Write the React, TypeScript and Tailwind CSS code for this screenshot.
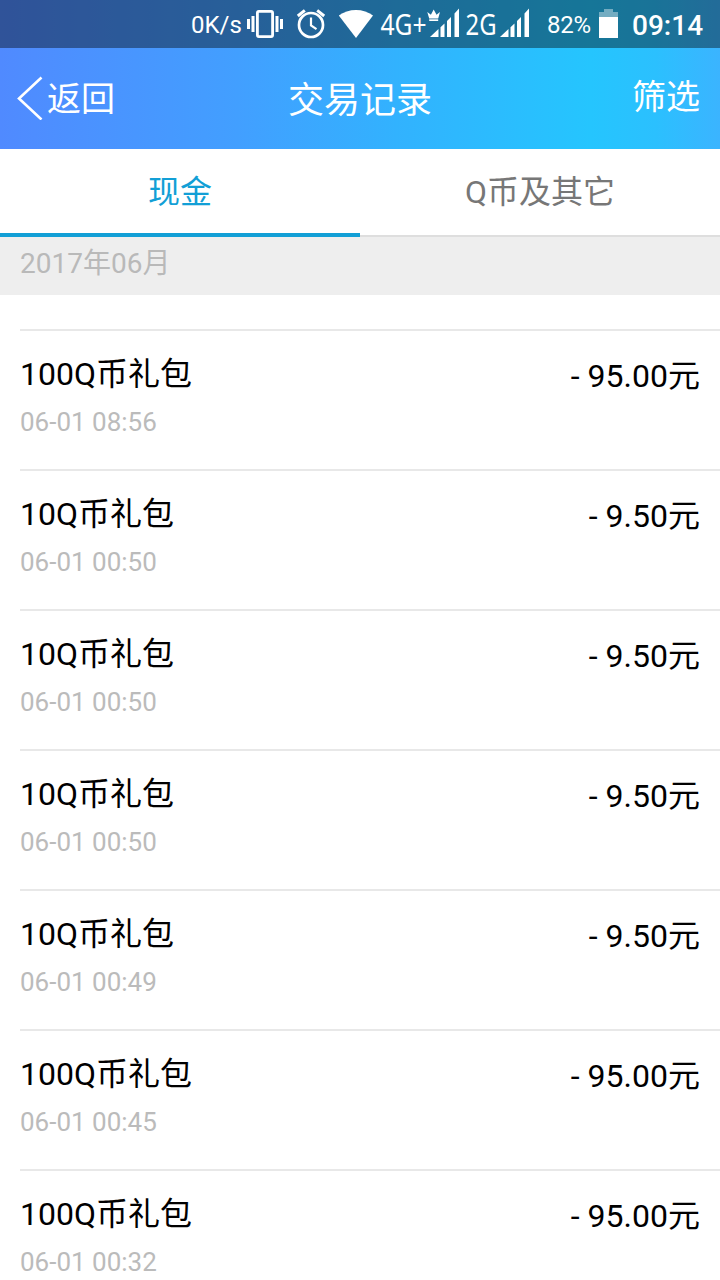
const records = [
  { title: "100Q币礼包", time: "06-01 08:56", amount: "95.00" },
  { title: "10Q币礼包", time: "06-01 00:50", amount: "9.50" },
  { title: "10Q币礼包", time: "06-01 00:50", amount: "9.50" },
  { title: "10Q币礼包", time: "06-01 00:50", amount: "9.50" },
  { title: "10Q币礼包", time: "06-01 00:49", amount: "9.50" },
  { title: "100Q币礼包", time: "06-01 00:45", amount: "95.00" },
  { title: "100Q币礼包", time: "06-01 00:32", amount: "95.00" },
];

const VibrateIcon = () => (
  <svg className="ml-[6px] h-12 w-9 shrink-0" viewBox="0 0 36 48" fill="#fff">
    <path d="M0 19h3v10H0zM4.5 16h3v16h-3zM28.5 16h3v16h-3zM33 19h3v10h-3z" />
    <rect x="10.4" y="11.4" width="15.2" height="25.2" rx="1.5" fill="none" stroke="#fff" strokeWidth="2.8" />
  </svg>
);

const AlarmIcon = () => (
  <svg className="ml-[13px] h-12 w-[30px] shrink-0" viewBox="0 0 30 48" fill="none" stroke="#fff">
    <circle cx="15" cy="25" r="12" strokeWidth="2.7" />
    <path d="M15 17.5v8l5.5 3.7" strokeWidth="2.2" />
    <path d="M1.8 16l7-5.6M28.2 16l-7-5.6" strokeWidth="3" />
  </svg>
);

const WifiIcon = () => (
  <svg className="ml-3 h-12 w-[35px] shrink-0" viewBox="0 0 35 48" fill="#fff">
    <path d="M18 38L.8 15.5C10 8 26 8 35 15.5z" />
  </svg>
);

const SignalIcon = ({ crown = false }: { crown?: boolean }) => (
  <svg className="h-12 w-[30px] shrink-0 overflow-visible" viewBox="0 0 30 48" fill="#fff">
    <path d="M0 37l8.500-8v8zM10.500 27.200l4-3.600V37h-4zM17 21l4-4v20h-4zM24.500 13.500l4.500-5V37h-4.500z" />
    {crown && (
      <>
        <path d="M-2.700 12l3.600 2.800L3.700 9.500l2.800 5.300L10 12l-1.800 6.500H-.8z" />
        <path d="M-.8 19.300h9v1.700h-9z" />
      </>
    )}
  </svg>
);

const StatusBar = () => (
  <div className="flex h-12 items-center bg-black/40 pl-[191px] leading-none">
    <span className="w-[50px] shrink-0 whitespace-nowrap pt-0.5 text-[24px]">0K/s</span>
    <VibrateIcon />
    <AlarmIcon />
    <WifiIcon />
    <svg className="ml-[7px] h-12 w-[50px] shrink-0 overflow-visible" viewBox="0 0 50 48" fill="#fff">
      <text x="0.500" y="35" fontSize="29" textLength="46" lengthAdjust="spacingAndGlyphs" className="font-['Noto_Sans']">
        4G+
      </text>
    </svg>
    <SignalIcon crown />
    <svg className="ml-[5px] h-12 w-[32px] shrink-0 overflow-visible" viewBox="0 0 32 48" fill="#fff">
      <text x="0.500" y="34.500" fontSize="29" textLength="31" lengthAdjust="spacingAndGlyphs" className="font-['Noto_Sans']">
        2G
      </text>
    </svg>
    <div className="ml-[3px] shrink-0">
      <SignalIcon />
    </div>
    <span className="ml-[17px] w-[45px] shrink-0 whitespace-nowrap pt-0.5 text-[24px] tracking-[-0.3px]">82%</span>
    <svg className="ml-[7px] h-12 w-[20px] shrink-0" viewBox="0 0 20 48" fill="#fff">
      <path d="M5 9h9v3h5v5H0v-5h5z" opacity=".4" />
      <path d="M0 17h19v21H0z" />
    </svg>
    <span className="ml-[13px] whitespace-nowrap pt-[3px] text-[28px] font-medium">09:14</span>
  </div>
);

const Header = () => (
  <header className="h-[149px] bg-[linear-gradient(90deg,#508aff_0%,#429fff_33%,#32b2fe_55%,#25c5fe_82%,#2bc0fe_91%,#3bb4ff_100%)] text-white">
    <StatusBar />
    <div className="grid h-[101px] grid-cols-3 items-center leading-none">
      <div className="flex items-center pl-[17px] text-[34px]">
        <svg className="mb-0.5 h-11 w-[26px]" viewBox="0 0 26 44" fill="none" stroke="#fff" strokeWidth="2.600">
          <path d="M24.500 1.500L2 22.500l22.500 21" />
        </svg>
        <span className="ml-1 pt-px">返回</span>
      </div>
      <h1 className="pt-1 text-center text-[36px]">交易记录</h1>
      <span className="pr-5 pb-[3px] text-right text-[34px]">筛选</span>
    </div>
  </header>
);

const Tabs = () => (
  <nav className="flex h-[88px] text-center text-[32px] leading-[86px]">
    <div className="h-full flex-1 border-b-4 border-[#129fd6] text-[#129fd6]">现金</div>
    <div className="h-full flex-1 border-b-2 border-[#dedede] text-[#777]">Q币及其它</div>
  </nav>
);

export default function App() {
  return (
    <div className="h-[1280px] w-[720px] overflow-hidden bg-white font-[Roboto,'Noto_Sans_CJK_SC',sans-serif]">
      <Header />
      <Tabs />
      <div className="h-[58px] bg-[#eee] pl-5 text-[28px] leading-[54px] text-[#b9b9b9]">2017年06月</div>
      <div className="mt-[34px] pl-5">
        {records.map((record, i) => (
          <div key={i} className="flex h-[140px] justify-between border-t-2 border-[#e8e8e8] pr-5">
            <div>
              <div className="mt-[23px] text-[32px] leading-10 text-black">{record.title}</div>
              <div className="mt-2 text-[26px] leading-10 text-[#bbb]">{record.time}</div>
            </div>
            <div className="mt-[25px] text-[32px] leading-10 text-black">- {record.amount}元</div>
          </div>
        ))}
      </div>
    </div>
  );
}
